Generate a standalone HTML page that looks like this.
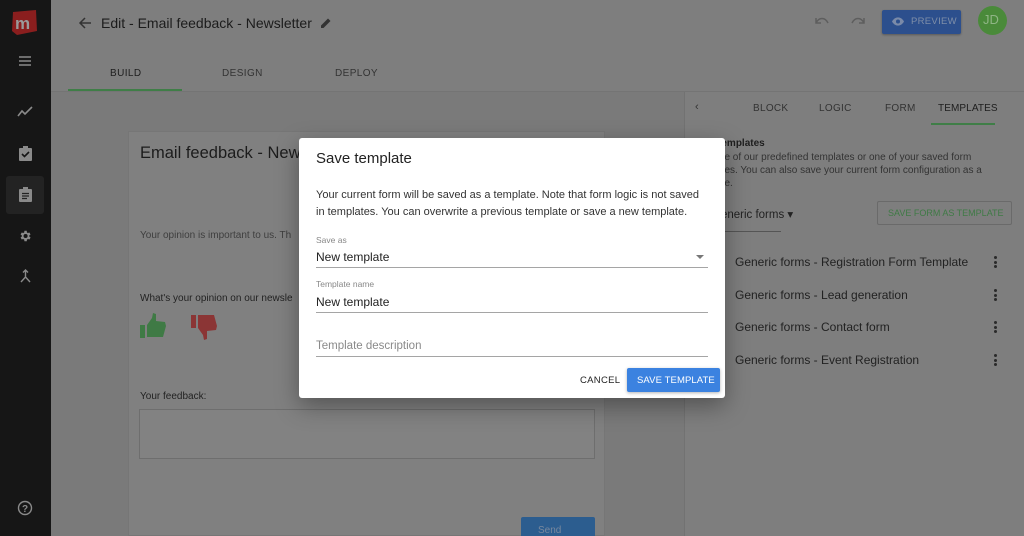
<!DOCTYPE html>
<html><head><meta charset="utf-8"><style>
*{margin:0;padding:0;box-sizing:border-box}
html,body{width:1024px;height:536px;overflow:hidden}
body{background:#7a7a7a;font-family:"Liberation Sans",sans-serif;position:relative;color:#1e1e1e}
.a{position:absolute}
.side{left:0;top:0;width:51px;height:536px;background:#161616}
.hdr{left:51px;top:0;width:973px;height:92px;background:#7e7e7e;border-bottom:1px solid #747474}
.t{white-space:nowrap}
.dlg{left:299px;top:138px;width:426px;height:260px;background:#fff;border-radius:3px;box-shadow:0 8px 24px rgba(0,0,0,.35)}
.lbl{font-size:8.5px;color:#888}
.val{font-size:12px;color:#222}
.ul{height:1px;background:#a5a5a5;left:17px;width:392px}
.li{font-size:12px;color:#222;left:735px}
.keb{left:994px;width:3px}
.keb i{display:block;width:3px;height:3px;border-radius:50%;background:#2a2a2a;margin-bottom:1.5px}
</style></head><body>
<div class="a side"></div>
<svg class="a" style="left:11px;top:9px" width="27" height="27" viewBox="0 0 27 27"><path d="M2 3 L25 1 L26 22 L6 26 L1 22Z" fill="#8a1e1e"/><text x="4" y="20" font-family="Liberation Sans" font-weight="bold" font-size="17" fill="#9a9a9a">m</text></svg>
<svg class="a" style="left:18px;top:55px" width="14" height="12"><path d="M1 2h12M1 6h12M1 10h12" stroke="#8a8a8a" stroke-width="1.5"/></svg>
<svg class="a" style="left:17px;top:106px" width="16" height="12"><path d="M1 10 L5 5 L8 8 L15 1" stroke="#8a8a8a" stroke-width="1.6" fill="none"/></svg>
<svg class="a" style="left:19px;top:146px" width="13" height="15"><rect x="0" y="2" width="13" height="13" rx="1" fill="#8a8a8a"/><rect x="4" y="0" width="5" height="3" fill="#8a8a8a"/><path d="M3 8 L5.5 10.5 L10 6" stroke="#161616" stroke-width="1.6" fill="none"/></svg>
<div class="a" style="left:6px;top:176px;width:38px;height:38px;background:#232323;border-radius:3px"></div>
<svg class="a" style="left:19px;top:187px" width="13" height="15"><rect x="0" y="2" width="13" height="13" rx="1" fill="#8a8a8a"/><rect x="4" y="0" width="5" height="3" fill="#8a8a8a"/><path d="M3 6.5h7M3 9h7M3 11.5h5" stroke="#232323" stroke-width="1.2"/></svg>
<svg class="a" style="left:18px;top:229px" width="14" height="14" viewBox="0 0 24 24"><path fill="#8a8a8a" d="M19.4 13a7.5 7.5 0 0 0 0-2l2.1-1.6-2-3.5-2.5 1a7 7 0 0 0-1.7-1L15 3h-4l-.4 2.9a7 7 0 0 0-1.7 1l-2.5-1-2 3.5L6.5 11a7.5 7.5 0 0 0 0 2l-2.1 1.6 2 3.5 2.5-1a7 7 0 0 0 1.7 1L11 21h4l.4-2.9a7 7 0 0 0 1.7-1l2.5 1 2-3.5zM13 15.5a3.5 3.5 0 1 1 0-7 3.5 3.5 0 0 1 0 7z"/></svg>
<svg class="a" style="left:19px;top:269px" width="13" height="14"><path d="M6.5 1v7M4 3.5l2.5-2.5 2.5 2.5M6.5 8L2 13M6.5 8l4.5 5" stroke="#8a8a8a" stroke-width="1.4" fill="none"/></svg>
<svg class="a" style="left:17px;top:500px" width="16" height="16"><circle cx="8" cy="8" r="6.5" stroke="#8a8a8a" stroke-width="1.4" fill="none"/><text x="5" y="12" font-size="10" font-family="Liberation Sans" font-weight="bold" fill="#8a8a8a">?</text></svg>

<div class="a hdr"></div>
<svg class="a" style="left:78px;top:16px" width="14" height="14"><path d="M13 7H2M7 2 2 7l5 5" stroke="#333" stroke-width="1.5" fill="none"/></svg>
<div class="a t" style="left:101px;top:15px;font-size:14px;color:#1c1c1c">Edit - Email feedback - Newsletter</div>
<svg class="a" style="left:320px;top:17px" width="12" height="12"><path d="M1 11 L1 8.5 L8 1.5 L10.5 4 L3.5 11Z" fill="#333"/></svg>
<svg class="a" style="left:814px;top:16px" width="16" height="10"><path d="M2 7 C5 1 11 1 14 7M2 2v5h5" stroke="#5e5e5e" stroke-width="1.5" fill="none"/></svg>
<svg class="a" style="left:850px;top:16px" width="16" height="10"><path d="M14 7 C11 1 5 1 2 7M14 2v5H9" stroke="#5e5e5e" stroke-width="1.5" fill="none"/></svg>
<div class="a" style="left:882px;top:10px;width:79px;height:24px;background:#2c4f8d;border-radius:2px;box-shadow:0 1px 2px rgba(0,0,0,.3)"></div>
<svg class="a" style="left:891px;top:16px" width="14" height="11"><path d="M1 5.5C4 0 10 0 13 5.5 10 11 4 11 1 5.5Z" fill="#7a8aa8"/><circle cx="7" cy="5.5" r="2" fill="#2c4f8d"/></svg>
<div class="a t" style="left:911px;top:16px;font-size:9.5px;color:#7e8ea8;letter-spacing:.3px">PREVIEW</div>
<div class="a" style="left:978px;top:6px;width:29px;height:29px;border-radius:50%;background:#4a8a3a"></div>
<div class="a t" style="left:983px;top:12px;font-size:13px;color:#8fb585">JD</div>
<div class="a t" style="left:110px;top:68px;font-size:10px;color:#1e1e1e;letter-spacing:.4px">BUILD</div>
<div class="a t" style="left:222px;top:68px;font-size:10px;color:#333;letter-spacing:.4px">DESIGN</div>
<div class="a t" style="left:335px;top:68px;font-size:10px;color:#333;letter-spacing:.4px">DEPLOY</div>
<div class="a" style="left:68px;top:89px;width:114px;height:2px;background:#3f7e47"></div>

<div class="a" style="left:128px;top:131px;width:477px;height:405px;background:#808080;border:1px solid #767676"></div>
<div class="a t" style="left:140px;top:144px;font-size:16.5px;color:#1c1c1c">Email feedback - New</div>
<div class="a t" style="left:140px;top:230px;font-size:10px;color:#3e3e3e">Your opinion is important to us. Th</div>
<div class="a t" style="left:140px;top:293px;font-size:10px;color:#222">What's your opinion on our newsle</div>
<svg class="a" style="left:140px;top:313px" width="27" height="26"><path d="M0 12h5v13H0zM7 12 L12 5 L13 0 L16 1 L16 8 L25 9 L26 13 L23 24 L7 24Z" fill="#3f7a45"/></svg>
<svg class="a" style="left:191px;top:314px" width="27" height="26"><path d="M0 1h5v13H0zM7 1 L23 1 L26 12 L25 16 L16 17 L16 25 L13 26 L12 21 L7 14Z" fill="#8b3535"/></svg>
<div class="a t" style="left:140px;top:391px;font-size:10px;color:#222">Your feedback:</div>
<div class="a" style="left:139px;top:409px;width:456px;height:50px;border:1px solid #6e6e6e;background:#828282"></div>
<div class="a" style="left:521px;top:517px;width:74px;height:24px;background:#2c5d8f;border-radius:2px"></div>
<div class="a t" style="left:538px;top:525px;font-size:10px;color:#78889e">Send</div>

<div class="a" style="left:684px;top:92px;width:340px;height:444px;background:#7e7e7e;border-left:1px solid #727272"></div>
<div class="a t" style="left:695px;top:101px;font-size:11px;color:#333">‹</div>
<div class="a t" style="left:753px;top:103px;font-size:10px;color:#333;letter-spacing:.3px">BLOCK</div>
<div class="a t" style="left:819px;top:103px;font-size:10px;color:#333;letter-spacing:.3px">LOGIC</div>
<div class="a t" style="left:885px;top:103px;font-size:10px;color:#333;letter-spacing:.3px">FORM</div>
<div class="a t" style="left:938px;top:103px;font-size:10px;color:#1e1e1e;letter-spacing:.1px">TEMPLATES</div>
<div class="a" style="left:931px;top:123px;width:64px;height:2px;background:#3f7e47"></div>
<div class="a t" style="left:716px;top:138px;font-size:10px;font-weight:bold;color:#1e1e1e">Templates</div>
<div class="a t" style="left:700px;top:151px;font-size:10px;line-height:13px;color:#333">se one of our predefined templates or one of your saved form<br>mplates. You can also save your current form configuration as a<br>mplate.</div>
<div class="a t" style="left:712px;top:207px;font-size:11.5px;color:#222">Generic forms ▾</div>
<div class="a" style="left:700px;top:231px;width:81px;height:1px;background:#555"></div>
<div class="a" style="left:877px;top:201px;width:135px;height:24px;border:1px solid #6a6a6a;border-radius:2px"></div>
<div class="a t" style="left:888px;top:208px;font-size:9px;color:#3f7a45">SAVE FORM AS TEMPLATE</div>
<div class="a t li" style="top:255px">Generic forms - Registration Form Template</div>
<div class="a t li" style="top:288px">Generic forms - Lead generation</div>
<div class="a t li" style="top:320px">Generic forms - Contact form</div>
<div class="a t li" style="top:353px">Generic forms - Event Registration</div>
<div class="a keb" style="top:256px"><i></i><i></i><i></i></div>
<div class="a keb" style="top:289px"><i></i><i></i><i></i></div>
<div class="a keb" style="top:321px"><i></i><i></i><i></i></div>
<div class="a keb" style="top:354px"><i></i><i></i><i></i></div>

<div class="a dlg">
 <div class="a t" style="left:17px;top:12px;font-size:15px;color:#222">Save template</div>
 <div class="a t" style="left:17px;top:49px;font-size:11px;line-height:16.5px;color:#333">Your current form will be saved as a template. Note that form logic is not saved<br>in templates. You can overwrite a previous template or save a new template.</div>
 <div class="a t lbl" style="left:17px;top:97px">Save as</div>
 <div class="a t val" style="left:17px;top:112px">New template</div>
 <div class="a" style="left:397px;top:117px;width:0;height:0;border-left:4px solid transparent;border-right:4px solid transparent;border-top:4px solid #777"></div>
 <div class="a ul" style="top:129px"></div>
 <div class="a t lbl" style="left:17px;top:141px">Template name</div>
 <div class="a t val" style="left:17px;top:157px">New template</div>
 <div class="a ul" style="top:174px"></div>
 <div class="a t" style="left:17px;top:202px;font-size:11.5px;color:#8a8a8a">Template description</div>
 <div class="a ul" style="top:218px"></div>
 <div class="a t" style="left:281px;top:237px;font-size:9.5px;color:#222;letter-spacing:.3px">CANCEL</div>
 <div class="a" style="left:328px;top:230px;width:93px;height:24px;background:#3b82e0;border-radius:2px;box-shadow:0 1px 3px rgba(0,0,0,.3)"></div>
 <div class="a t" style="left:338px;top:237px;font-size:9.5px;color:#fff;letter-spacing:.1px">SAVE TEMPLATE</div>
</div>
</body></html>
